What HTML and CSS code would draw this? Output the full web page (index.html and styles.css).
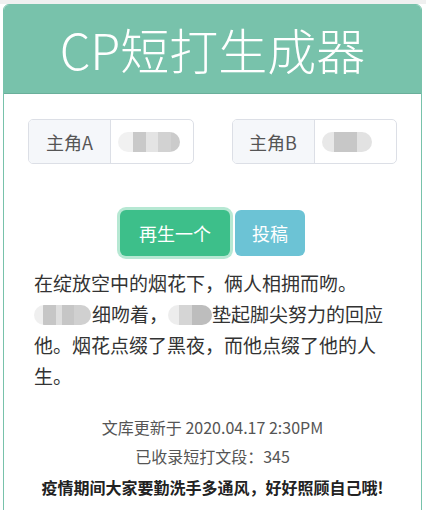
FILE: index.html
```html
<!DOCTYPE html>
<html lang="zh-cn">
<head>
    <meta charset="UTF-8">
    <meta name="viewport" content="width=device-width, initial-scale=1.0">
    <title>CP短打生成器</title>
    <link rel="stylesheet" href="styles.css">
</head>
<body>
    <div class="card">
        <header class="card-header">
            <h1>CP短打生成器</h1>
        </header>
        <div class="card-body">
            <div class="names">
                <div class="input-group">
                    <span class="addon">主角A</span>
                    <span class="field"><span class="blur blur-a"></span></span>
                </div>
                <div class="input-group">
                    <span class="addon">主角B</span>
                    <span class="field"><span class="blur blur-b"></span></span>
                </div>
            </div>
            <div class="actions">
                <button class="btn btn-green">再生一个</button>
                <button class="btn btn-blue">投稿</button>
            </div>
            <p class="story">在绽放空中的烟花下，俩人相拥而吻。<span class="blur blur-name1"></span>细吻着，<span class="blur blur-name2"></span>垫起脚尖努力的回应他。烟花点缀了黑夜，而他点缀了他的人生。</p>
            <div class="footer">
                <p>文库更新于 2020.04.17 2:30PM</p>
                <p>已收录短打文段：345</p>
                <p class="notice">疫情期间大家要勤洗手多通风，好好照顾自己哦!</p>
            </div>
        </div>
    </div>
</body>
</html>
```

FILE: styles.css
```css
body {
    font-family: "Noto Sans CJK SC", "Noto Sans", sans-serif;
    background-color: #fff;
    margin: 0;
    padding: 0;
    border-top: 4px solid #f0f0f0;
}
.card {
    margin: 0 4px 0 3px;
    border: 1px solid #78c2ab;
    border-radius: 6px 6px 0 0;
    height: 520px;
    overflow: hidden;
}
.card-header {
    background-color: #78c2ab;
    height: 88px;
    border-bottom: 1px solid #6aaf9a;
    display: flex;
    align-items: center;
    justify-content: center;
}
.card-header h1 {
    margin: 0;
    color: #fff;
    font-size: 49px;
    font-weight: 300;
    padding-bottom: 2px;
}
.names {
    display: flex;
    gap: 38px;
    padding: 0 24px;
    margin-top: 25px;
}
.input-group {
    flex: 1;
    display: flex;
    height: 43px;
    border: 1px solid #dcdfe6;
    border-radius: 5px;
    overflow: hidden;
}
.addon {
    background-color: #f5f7fa;
    color: #555;
    font-size: 18px;
    width: 81px;
    border-right: 1px solid #dcdfe6;
    display: flex;
    align-items: center;
    justify-content: center;
}
.field {
    flex: 1;
    display: flex;
    align-items: center;
    padding-left: 7px;
}
.blur {
    display: inline-block;
    height: 20px;
    border-radius: 10px;
    filter: blur(0.6px);
}
.blur-a {
    width: 62px;
    background: linear-gradient(90deg, #f1f1f1 0 25%, #c9c9c9 25% 45%, #e4e4e4 45% 65%, #d2d2d2 65% 85%, #cbcbcb 85%);
}
.blur-b {
    width: 50px;
    background: linear-gradient(90deg, #e8e8e8 0 25%, #c7c7c7 25% 70%, #e2e2e2 70%);
}
.actions {
    display: flex;
    justify-content: center;
    gap: 5px;
    margin-top: 46px;
}
.btn {
    font-family: inherit;
    font-size: 18px;
    color: #fff;
    border: none;
    border-radius: 6px;
    height: 46px;
    cursor: pointer;
}
.btn-green {
    background-color: #3dbf8a;
    width: 110px;
    box-shadow: 0 0 0 3px #b6e8d3;
}
.btn-blue {
    background-color: #6cc3d5;
    width: 70px;
}
.story {
    margin: 11px 0 0;
    padding: 0 30px;
    font-size: 19px;
    line-height: 31px;
    color: #333;
}
.blur-name1 {
    width: 57px;
    margin-right: 1px;
    vertical-align: -3px;
    background: linear-gradient(90deg, #efefef 0 15%, #c6c6c6 15% 38%, #dedede 38% 50%, #c6c6c6 50% 70%, #d0d0d0 70%);
}
.blur-name2 {
    width: 44px;
    vertical-align: -3px;
    background: linear-gradient(90deg, #ededed 0 25%, #d5d5d5 25% 55%, #bdbdbd 55%);
}
.footer {
    text-align: center;
    margin-top: 22px;
    font-size: 16px;
    color: #555;
}
.footer p {
    margin: 0;
    line-height: 29px;
}
.footer .notice {
    font-weight: bold;
    color: #222;
    line-height: 32px;
}
```
